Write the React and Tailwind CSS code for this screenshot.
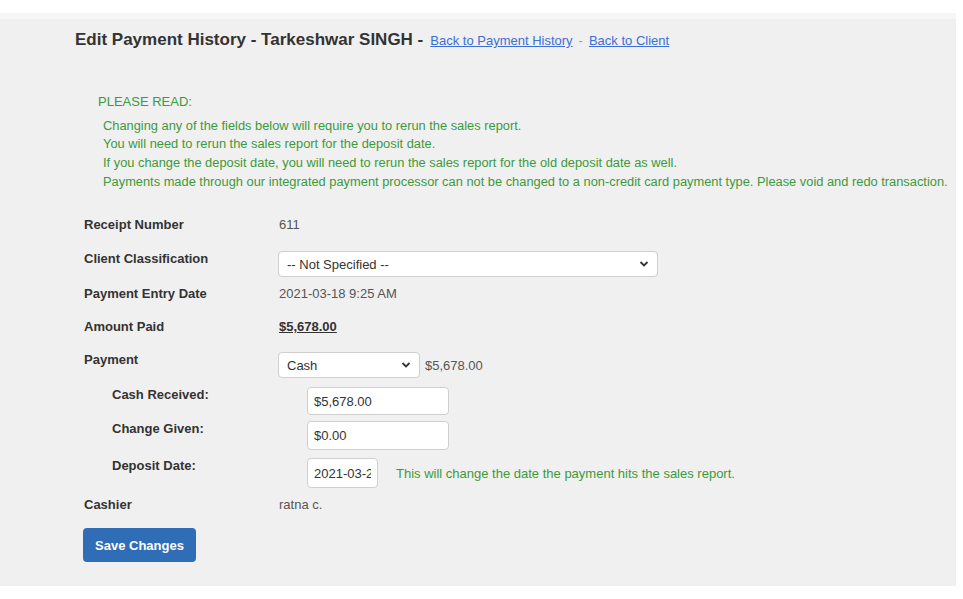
import React, { useState } from "react";

const notes = [
  "Changing any of the fields below will require you to rerun the sales report.",
  "You will need to rerun the sales report for the deposit date.",
  "If you change the deposit date, you will need to rerun the sales report for the old deposit date as well.",
  "Payments made through our integrated payment processor can not be changed to a non-credit card payment type. Please void and redo transaction.",
];

function Chevron() {
  return (
    <svg
      className="pointer-events-none absolute right-[9px] top-1/2 -translate-y-1/2"
      width="10"
      height="7"
      viewBox="0 0 10 7"
      fill="none"
    >
      <path d="M1.5 1.5 5 5l3.5-3.5" stroke="#333" strokeWidth="1.8" />
    </svg>
  );
}

function Select({ value, options, onChange, className }) {
  return (
    <div className={`relative ${className}`}>
      <select
        value={value}
        onChange={(e) => onChange(e.target.value)}
        className="h-full w-full appearance-none rounded-[4px] border border-[#cfcfcf] bg-white pl-[8px] pr-6 text-[13px] text-[#333] outline-none"
      >
        {options.map((o) => (
          <option key={o}>{o}</option>
        ))}
      </select>
      <Chevron />
    </div>
  );
}

export default function App() {
  const [classification, setClassification] = useState("-- Not Specified --");
  const [payment, setPayment] = useState("Cash");
  const [cashReceived, setCashReceived] = useState("$5,678.00");
  const [changeGiven, setChangeGiven] = useState("$0.00");
  const [depositDate, setDepositDate] = useState("2021-03-2");

  const label = "w-[195px] shrink-0 text-[13px] font-bold leading-[15px] text-[#333]";
  const value = "text-[13px] leading-[15px] text-[#555]";

  return (
    <div className="min-h-[599px] bg-white font-['Liberation_Sans',Arial,sans-serif]">
      <div className="h-[13px] bg-white" />
      <div className="h-[6px] w-[956px] bg-[#f6f6f6]" />
      <div className="h-[567px] w-[956px] bg-[#f0f0f0]">
        {/* header */}
        <div className="flex items-baseline pl-[75px] pt-[11px]">
          <h1 className="text-[17px] font-bold leading-[19px] text-[#333]">
            Edit Payment History - Tarkeshwar SINGH -
          </h1>
          <a href="#" className="ml-[7px] text-[13px] text-[#3b6fd6] underline">
            Back to Payment History
          </a>
          <span className="mx-[6px] text-[13px] text-[#999]">-</span>
          <a href="#" className="text-[13px] text-[#3b6fd6] underline">
            Back to Client
          </a>
        </div>

        {/* notice */}
        <div className="pl-[98px] pt-[43px] text-[13px] text-[#3d9a3a]">
          <div className="leading-[15px]">PLEASE READ:</div>
          <div className="mt-[8px] pl-[5px] text-[12.85px]">
            {notes.map((n) => (
              <div key={n} className="whitespace-nowrap leading-[18.7px]">
                {n}
              </div>
            ))}
          </div>
        </div>

        {/* form */}
        <div className="pl-[84px] pt-[26px]">
          <div className="flex h-[34px] items-start">
            <div className={label}>Receipt Number</div>
            <div className={value}>611</div>
          </div>
          <div className="flex h-[35px] items-start">
            <div className={label}>Client Classification</div>
            <Select
              value={classification}
              onChange={setClassification}
              options={["-- Not Specified --", "Individual", "Corporate"]}
              className="h-[26px] w-[380px] -ml-[1px]"
            />
          </div>
          <div className="flex h-[33px] items-start">
            <div className={label}>Payment Entry Date</div>
            <div className={value}>2021-03-18 9:25 AM</div>
          </div>
          <div className="flex h-[33px] items-start">
            <div className={label}>Amount Paid</div>
            <div className="text-[13px] font-bold leading-[15px] text-[#333] underline">
              $5,678.00
            </div>
          </div>
          <div className="flex h-[35px] items-start">
            <div className={label}>Payment</div>
            <Select
              value={payment}
              onChange={setPayment}
              options={["Cash", "Check", "Credit Card"]}
              className="h-[26px] w-[142px] -ml-[1px]"
            />
            <div className={`${value} ml-[5px] pt-[6px]`}>$5,678.00</div>
          </div>

          <div className="ml-[28px]">
            <div className="flex h-[34px] items-start">
              <div className={label}>Cash Received:</div>
              <input
                value={cashReceived}
                onChange={(e) => setCashReceived(e.target.value)}
                className="h-[28px] w-[142px] rounded-[4px] border border-[#cfcfcf] bg-white px-[6px] text-[13px] text-[#333] outline-none"
              />
            </div>
            <div className="flex h-[37px] items-start">
              <div className={label}>Change Given:</div>
              <input
                value={changeGiven}
                onChange={(e) => setChangeGiven(e.target.value)}
                className="h-[29px] w-[142px] rounded-[4px] border border-[#cfcfcf] bg-white px-[6px] text-[13px] text-[#333] outline-none"
              />
            </div>
            <div className="flex h-[39px] items-start">
              <div className={label}>Deposit Date:</div>
              <input
                value={depositDate}
                onChange={(e) => setDepositDate(e.target.value)}
                className="h-[30px] w-[71px] rounded-[4px] border border-[#cfcfcf] bg-white px-[6px] text-[13px] text-[#333] outline-none"
              />
              <div className="ml-[18px] pt-[8px] text-[13px] leading-[15px] text-[#3d9a3a]">
                This will change the date the payment hits the sales report.
              </div>
            </div>
          </div>

          <div className="flex h-[31px] items-start">
            <div className={label}>Cashier</div>
            <div className={value}>ratna c.</div>
          </div>

          <button className="-ml-[1px] h-[34px] w-[113px] rounded-[4px] bg-[#2f6db6] text-[13px] font-bold text-white">
            Save Changes
          </button>
        </div>
      </div>
    </div>
  );
}
